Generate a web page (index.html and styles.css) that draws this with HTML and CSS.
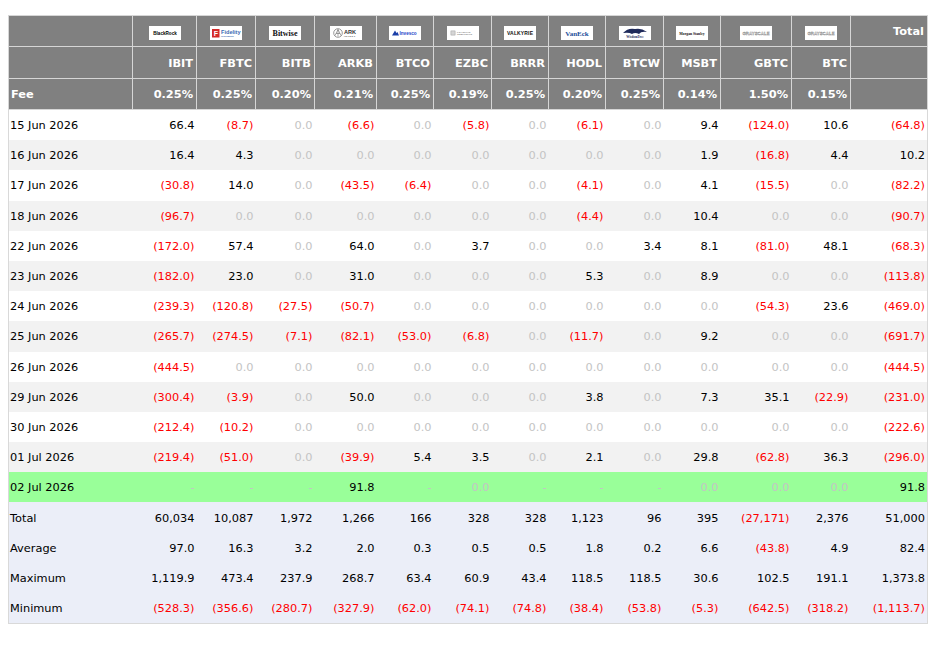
FILE: index.html
```html
<!DOCTYPE html>
<html>
<head>
<meta charset="utf-8">
<link rel="stylesheet" href="styles.css">
</head>
<body>
<div class="page">
<table class="flows">
<colgroup>
<col class="c-date"><col class="c64"><col class="c59"><col class="c59"><col class="c62"><col class="c57"><col class="c58"><col class="c57"><col class="c57"><col class="c58"><col class="c57"><col class="c71"><col class="c59"><col class="c77">
</colgroup>
<thead>
<tr class="h-logo">
<th></th>
<th class="logo"><svg viewBox="0 0 32 14" width="32" height="14"><rect width="32" height="14" fill="#fff"/><text x="16" y="9" text-anchor="middle" font-family="Liberation Sans" font-weight="bold" font-size="4.6" fill="#000">BlackRock</text></svg></th>
<th class="logo"><svg viewBox="0 0 32 14" width="32" height="14"><rect width="32" height="14" fill="#fff"/><rect x="2" y="3" width="7.5" height="8.5" fill="#d42a2a"/><text x="5.8" y="10" text-anchor="middle" font-family="Liberation Sans" font-weight="bold" font-size="7" fill="#fff">F</text><text x="11" y="8.3" font-family="Liberation Sans" font-weight="bold" font-size="5.6" fill="#3b6cb4">Fidelity</text><text x="11" y="11" font-family="Liberation Sans" font-size="1.8" fill="#3b6cb4">INVESTMENTS</text></svg></th>
<th class="logo"><svg viewBox="0 0 32 14" width="32" height="14"><rect width="32" height="14" fill="#fff"/><text x="16" y="10" text-anchor="middle" font-family="Liberation Serif" font-size="8" fill="#111">Bitwise</text></svg></th>
<th class="logo"><svg viewBox="0 0 32 14" width="32" height="14"><rect width="32" height="14" fill="#fff"/><circle cx="8" cy="7" r="4.3" fill="none" stroke="#555" stroke-width="0.6"/><path d="M5 9.5 L8 3.5 L11 9.5 M6 7.5 H10 M8 3.5 V10.5" fill="none" stroke="#555" stroke-width="0.5"/><text x="14" y="7.6" font-family="Liberation Sans" font-size="5.6" fill="#333">ARK</text><text x="14" y="11" font-family="Liberation Sans" font-size="2.4" fill="#555" letter-spacing="0.5">INVEST</text></svg></th>
<th class="logo"><svg viewBox="0 0 32 14" width="32" height="14"><rect width="32" height="14" fill="#fff"/><path d="M3 9.5 L6 4.5 L7.5 7 L8.5 6 L10 9.5 Z" fill="#1c3fa8"/><text x="10.5" y="9" font-family="Liberation Sans" font-size="4.6" fill="#1c3fc8">Invesco</text></svg></th>
<th class="logo"><svg viewBox="0 0 32 14" width="32" height="14"><rect width="32" height="14" fill="#fff"/><rect x="4" y="5" width="4" height="4" fill="none" stroke="#888" stroke-width="0.6"/><path d="M4 7 H8 M6 5 V9" stroke="#888" stroke-width="0.4"/><text x="10" y="6.6" font-family="Liberation Sans" font-size="2.2" fill="#777" letter-spacing="0.3">FRANKLIN</text><text x="10" y="9.4" font-family="Liberation Sans" font-size="2.2" fill="#777" letter-spacing="0.2">TEMPLETON</text></svg></th>
<th class="logo"><svg viewBox="0 0 32 14" width="32" height="14"><rect width="32" height="14" fill="#fff"/><text x="16" y="9" text-anchor="middle" font-family="Liberation Sans" font-weight="bold" font-size="5" fill="#111" textLength="26">VALKYRIE</text></svg></th>
<th class="logo"><svg viewBox="0 0 32 14" width="32" height="14"><rect width="32" height="14" fill="#fff"/><text x="16" y="9.6" text-anchor="middle" font-family="Liberation Serif" font-weight="bold" font-size="7" fill="#1d4f9a">VanEck</text></svg></th>
<th class="logo"><svg viewBox="0 0 32 14" width="32" height="14"><rect width="32" height="14" fill="#fff"/><path d="M4 7 Q9 1.5 16 3 Q22 1.5 28 6 Q22 5 20 8 Q16 6 13 8 Q10 6 4 7 Z" fill="#1f2a5a"/><text x="16" y="12.3" text-anchor="middle" font-family="Liberation Serif" font-size="3.2" fill="#1f2a5a">WisdomTree</text></svg></th>
<th class="logo"><svg viewBox="0 0 32 14" width="32" height="14"><rect width="32" height="14" fill="#fff"/><text x="16" y="8.6" text-anchor="middle" font-family="Liberation Serif" font-size="3.7" fill="#111">Morgan Stanley</text></svg></th>
<th class="logo"><svg viewBox="0 0 32 14" width="32" height="14"><rect width="32" height="14" fill="#fff"/><text x="16" y="8.8" text-anchor="middle" font-family="Liberation Sans" font-size="4.4" fill="#fff" stroke="#777" stroke-width="0.3">GRAYSCALE</text></svg></th>
<th class="logo"><svg viewBox="0 0 32 14" width="32" height="14"><rect width="32" height="14" fill="#fff"/><text x="16" y="8.8" text-anchor="middle" font-family="Liberation Sans" font-size="4.4" fill="#fff" stroke="#777" stroke-width="0.3">GRAYSCALE</text></svg></th>
<th class="num">Total</th>
</tr>
<tr class="h-tick">
<th></th><th class="num">IBIT</th><th class="num">FBTC</th><th class="num">BITB</th><th class="num">ARKB</th><th class="num">BTCO</th><th class="num">EZBC</th><th class="num">BRRR</th><th class="num">HODL</th><th class="num">BTCW</th><th class="num">MSBT</th><th class="num">GBTC</th><th class="num">BTC</th><th></th>
</tr>
<tr class="h-fee">
<th class="lbl">Fee</th><th class="num">0.25%</th><th class="num">0.25%</th><th class="num">0.20%</th><th class="num">0.21%</th><th class="num">0.25%</th><th class="num">0.19%</th><th class="num">0.25%</th><th class="num">0.20%</th><th class="num">0.25%</th><th class="num">0.14%</th><th class="num">1.50%</th><th class="num">0.15%</th><th></th>
</tr>
</thead>
<tbody>
<tr><td>15 Jun 2026</td><td>66.4</td><td class="neg">(8.7)</td><td class="z">0.0</td><td class="neg">(6.6)</td><td class="z">0.0</td><td class="neg">(5.8)</td><td class="z">0.0</td><td class="neg">(6.1)</td><td class="z">0.0</td><td>9.4</td><td class="neg">(124.0)</td><td>10.6</td><td class="neg">(64.8)</td></tr>
<tr><td>16 Jun 2026</td><td>16.4</td><td>4.3</td><td class="z">0.0</td><td class="z">0.0</td><td class="z">0.0</td><td class="z">0.0</td><td class="z">0.0</td><td class="z">0.0</td><td class="z">0.0</td><td>1.9</td><td class="neg">(16.8)</td><td>4.4</td><td>10.2</td></tr>
<tr><td>17 Jun 2026</td><td class="neg">(30.8)</td><td>14.0</td><td class="z">0.0</td><td class="neg">(43.5)</td><td class="neg">(6.4)</td><td class="z">0.0</td><td class="z">0.0</td><td class="neg">(4.1)</td><td class="z">0.0</td><td>4.1</td><td class="neg">(15.5)</td><td class="z">0.0</td><td class="neg">(82.2)</td></tr>
<tr><td>18 Jun 2026</td><td class="neg">(96.7)</td><td class="z">0.0</td><td class="z">0.0</td><td class="z">0.0</td><td class="z">0.0</td><td class="z">0.0</td><td class="z">0.0</td><td class="neg">(4.4)</td><td class="z">0.0</td><td>10.4</td><td class="z">0.0</td><td class="z">0.0</td><td class="neg">(90.7)</td></tr>
<tr><td>22 Jun 2026</td><td class="neg">(172.0)</td><td>57.4</td><td class="z">0.0</td><td>64.0</td><td class="z">0.0</td><td>3.7</td><td class="z">0.0</td><td class="z">0.0</td><td>3.4</td><td>8.1</td><td class="neg">(81.0)</td><td>48.1</td><td class="neg">(68.3)</td></tr>
<tr><td>23 Jun 2026</td><td class="neg">(182.0)</td><td>23.0</td><td class="z">0.0</td><td>31.0</td><td class="z">0.0</td><td class="z">0.0</td><td class="z">0.0</td><td>5.3</td><td class="z">0.0</td><td>8.9</td><td class="z">0.0</td><td class="z">0.0</td><td class="neg">(113.8)</td></tr>
<tr><td>24 Jun 2026</td><td class="neg">(239.3)</td><td class="neg">(120.8)</td><td class="neg">(27.5)</td><td class="neg">(50.7)</td><td class="z">0.0</td><td class="z">0.0</td><td class="z">0.0</td><td class="z">0.0</td><td class="z">0.0</td><td class="z">0.0</td><td class="neg">(54.3)</td><td>23.6</td><td class="neg">(469.0)</td></tr>
<tr><td>25 Jun 2026</td><td class="neg">(265.7)</td><td class="neg">(274.5)</td><td class="neg">(7.1)</td><td class="neg">(82.1)</td><td class="neg">(53.0)</td><td class="neg">(6.8)</td><td class="z">0.0</td><td class="neg">(11.7)</td><td class="z">0.0</td><td>9.2</td><td class="z">0.0</td><td class="z">0.0</td><td class="neg">(691.7)</td></tr>
<tr><td>26 Jun 2026</td><td class="neg">(444.5)</td><td class="z">0.0</td><td class="z">0.0</td><td class="z">0.0</td><td class="z">0.0</td><td class="z">0.0</td><td class="z">0.0</td><td class="z">0.0</td><td class="z">0.0</td><td class="z">0.0</td><td class="z">0.0</td><td class="z">0.0</td><td class="neg">(444.5)</td></tr>
<tr><td>29 Jun 2026</td><td class="neg">(300.4)</td><td class="neg">(3.9)</td><td class="z">0.0</td><td>50.0</td><td class="z">0.0</td><td class="z">0.0</td><td class="z">0.0</td><td>3.8</td><td class="z">0.0</td><td>7.3</td><td>35.1</td><td class="neg">(22.9)</td><td class="neg">(231.0)</td></tr>
<tr><td>30 Jun 2026</td><td class="neg">(212.4)</td><td class="neg">(10.2)</td><td class="z">0.0</td><td class="z">0.0</td><td class="z">0.0</td><td class="z">0.0</td><td class="z">0.0</td><td class="z">0.0</td><td class="z">0.0</td><td class="z">0.0</td><td class="z">0.0</td><td class="z">0.0</td><td class="neg">(222.6)</td></tr>
<tr><td>01 Jul 2026</td><td class="neg">(219.4)</td><td class="neg">(51.0)</td><td class="z">0.0</td><td class="neg">(39.9)</td><td>5.4</td><td>3.5</td><td class="z">0.0</td><td>2.1</td><td class="z">0.0</td><td>29.8</td><td class="neg">(62.8)</td><td>36.3</td><td class="neg">(296.0)</td></tr>
<tr class="today"><td>02 Jul 2026</td><td class="z">-</td><td class="z">-</td><td class="z">-</td><td>91.8</td><td class="z">-</td><td class="z">0.0</td><td class="z">-</td><td class="z">-</td><td class="z">-</td><td class="z">0.0</td><td class="z">0.0</td><td class="z">0.0</td><td>91.8</td></tr>
<tr class="stat"><td>Total</td><td>60,034</td><td>10,087</td><td>1,972</td><td>1,266</td><td>166</td><td>328</td><td>328</td><td>1,123</td><td>96</td><td>395</td><td class="neg">(27,171)</td><td>2,376</td><td>51,000</td></tr>
<tr class="stat"><td>Average</td><td>97.0</td><td>16.3</td><td>3.2</td><td>2.0</td><td>0.3</td><td>0.5</td><td>0.5</td><td>1.8</td><td>0.2</td><td>6.6</td><td class="neg">(43.8)</td><td>4.9</td><td>82.4</td></tr>
<tr class="stat"><td>Maximum</td><td>1,119.9</td><td>473.4</td><td>237.9</td><td>268.7</td><td>63.4</td><td>60.9</td><td>43.4</td><td>118.5</td><td>118.5</td><td>30.6</td><td>102.5</td><td>191.1</td><td>1,373.8</td></tr>
<tr class="stat"><td>Minimum</td><td class="neg">(528.3)</td><td class="neg">(356.6)</td><td class="neg">(280.7)</td><td class="neg">(327.9)</td><td class="neg">(62.0)</td><td class="neg">(74.1)</td><td class="neg">(74.8)</td><td class="neg">(38.4)</td><td class="neg">(53.8)</td><td class="neg">(5.3)</td><td class="neg">(642.5)</td><td class="neg">(318.2)</td><td class="neg">(1,113.7)</td></tr>
</tbody>
</table>
</div>
</body>
</html>
```

FILE: styles.css
```css
html, body {
  margin: 0;
  padding: 0;
  background: #fff;
}

.page {
  padding: 15px 8px;
}

.flows {
  border-collapse: collapse;
  table-layout: fixed;
  width: 919px;
  font-family: "DejaVu Sans", sans-serif;
  font-size: 11.35px;
  color: #000;
  border: 1px solid #d9d9d9;
}

.c-date { width: 124px; }
.c64 { width: 64px; }
.c59 { width: 59px; }
.c62 { width: 62px; }
.c57 { width: 57px; }
.c58 { width: 58px; }
.c71 { width: 71px; }
.c77 { width: 77px; }

.flows th {
  background: #808080;
  color: #fff;
  font-weight: bold;
  border: 1px solid #d6d6d6;
  padding: 0 3px;
  white-space: nowrap;
}

.flows th.num { text-align: right; }
.flows th.lbl { text-align: left; padding-left: 2px; }
.flows th.logo { text-align: center; padding: 3px 0 0; }
.flows th.logo svg { display: block; margin: 0 auto; }

.h-logo th { height: 30px; }
.h-logo th.logo { height: 27px; }
.h-tick th { height: 31px; }
.h-fee th { height: 30px; }

.flows td {
  height: 30.2px;
  padding: 0 2px;
  text-align: right;
  white-space: nowrap;
}

.flows td:first-child {
  text-align: left;
  padding-left: 1px;
}

.flows tbody tr:nth-child(even) td { background: #f2f2f2; }
.flows tbody tr.today td { background: #99ff99; }
.flows tbody tr.stat td { background: #ebeef8; }

.neg { color: #ff0000; }
.z { color: #c4c4c4; }
```
